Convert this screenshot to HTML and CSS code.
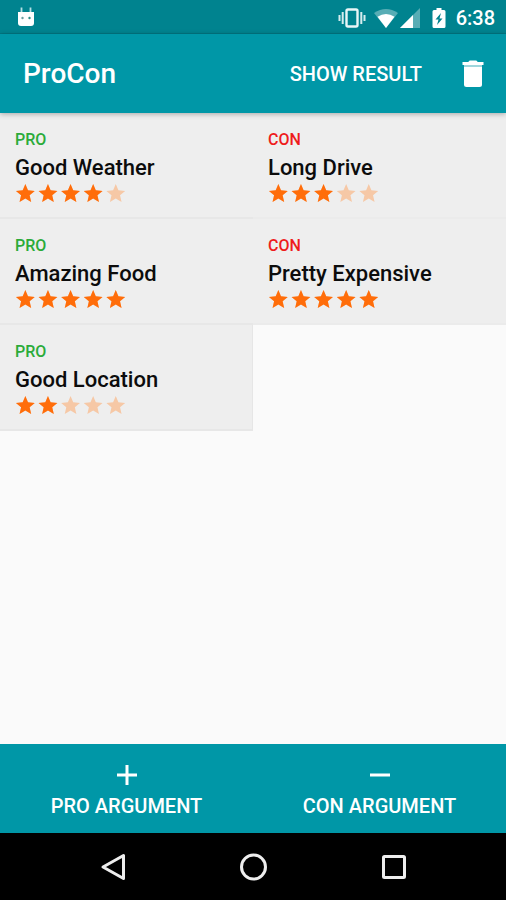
FILE: index.html
```html
<!DOCTYPE html>
<html lang="en">
<head>
<meta charset="utf-8">
<meta name="viewport" content="width=device-width, initial-scale=1">
<title>ProCon</title>
<link rel="stylesheet" href="styles.css">
</head>
<body>
<svg class="defs" aria-hidden="true">
  <symbol id="star" viewBox="0 0 24 24"><path d="M12 17.27 18.18 21l-1.64-7.03L22 9.24l-7.19-.61L12 2 9.19 8.63 2 9.24l5.46 4.73L5.82 21z"/></symbol>
  <symbol id="rating" viewBox="1 0 120 24">
    <use href="#star" width="24" height="24"/>
    <use href="#star" x="24" width="24" height="24"/>
    <use href="#star" x="48" width="24" height="24"/>
    <use href="#star" x="72" width="24" height="24"/>
    <use href="#star" x="96" width="24" height="24"/>
  </symbol>
</svg>
<div class="screen">
  <div class="status">
    <svg class="bot" width="18" height="22" viewBox="0 0 18 22" aria-hidden="true">
      <path d="M4.500 .5v5M13.500 .5v5" stroke="#b5dfe3" stroke-width="1.800"/>
      <path d="M1 5h16V16a3 3 0 0 1-3 3H4a3 3 0 0 1-3-3z" fill="#fff"/>
      <circle cx="5.500" cy="11" r="1.200" fill="#6d9ea0"/><circle cx="12.500" cy="11" r="1.200" fill="#2f8d84"/>
    </svg>
    <div class="indicators">
      <svg width="28" height="22" viewBox="0 0 28 22" aria-hidden="true">
        <rect x="8.500" y="2.500" width="11" height="17" rx="1.500" fill="none" stroke="#e9f6f7" stroke-width="2.400"/>
        <path d="M4.700 5v12M23.300 5v12M1.500 8v6M26.500 8v6" stroke="#d5edef" stroke-width="2"/>
      </svg>
      <svg class="wifi" width="26" height="22" viewBox="0 0 26 22" aria-hidden="true">
        <path d="M13 21 1 6Q13-2 25 6z" fill="#58adb5"/>
        <path d="M13 21 4.500 9.700Q13 4.500 21.500 9.700z" fill="#fff"/>
      </svg>
      <svg width="22" height="22" viewBox="0 0 22 22" aria-hidden="true">
        <path d="M1 21 21 1v20z" fill="#58adb5"/><path d="M1 21 14 8v13z" fill="#fff"/>
      </svg>
      <svg class="battery" width="14" height="22" viewBox="0 0 14 22" aria-hidden="true">
        <path d="M4.500 1h5v2H12q1.500 0 1.500 1.500v15q0 1.500-1.500 1.500H2Q.5 21 .5 19.500v-15Q.5 3 2 3h2.500z" fill="#fff"/>
        <path d="M9 6 3.500 12.500h3L5 18l5.500-6.500h-3z" fill="#00838f"/>
      </svg>
      <span class="clock">6:38</span>
    </div>
  </div>

  <header class="appbar">
    <h1>ProCon</h1>
    <button type="button" class="result">SHOW RESULT</button>
    <button type="button" class="trash" aria-label="Delete all">
      <svg width="22" height="28" viewBox="0 0 22 28" aria-hidden="true" fill="#fff">
        <path d="M2 7h18v17.500q0 2.500-2.500 2.500h-13Q2 27 2 24.500z"/>
        <path d="M.5 2h5.700L7.700.5h6.600L15.800 2h5.700v3H.5z"/>
        <path d="M2 5h18V7H2z" fill="#9fd6dc"/>
      </svg>
    </button>
  </header>

  <main class="board">
    <ul class="column">
      <li class="card pro">
        <span class="kind">PRO</span><h2>Good Weather</h2>
        <svg class="rating r4" role="img" aria-label="4 of 5"><use class="off" href="#rating"/><use class="on" href="#rating"/></svg>
      </li>
      <li class="card pro">
        <span class="kind">PRO</span><h2>Amazing Food</h2>
        <svg class="rating r5" role="img" aria-label="5 of 5"><use class="off" href="#rating"/><use class="on" href="#rating"/></svg>
      </li>
      <li class="card pro">
        <span class="kind">PRO</span><h2>Good Location</h2>
        <svg class="rating r2" role="img" aria-label="2 of 5"><use class="off" href="#rating"/><use class="on" href="#rating"/></svg>
      </li>
    </ul>
    <ul class="column">
      <li class="card con">
        <span class="kind">CON</span><h2>Long Drive</h2>
        <svg class="rating r3" role="img" aria-label="3 of 5"><use class="off" href="#rating"/><use class="on" href="#rating"/></svg>
      </li>
      <li class="card con">
        <span class="kind">CON</span><h2>Pretty Expensive</h2>
        <svg class="rating r5" role="img" aria-label="5 of 5"><use class="off" href="#rating"/><use class="on" href="#rating"/></svg>
      </li>
    </ul>
  </main>

  <footer class="actions">
    <button type="button">
      <svg width="22" height="22" viewBox="0 0 22 22" aria-hidden="true"><path d="M11 1v20M1 11h20" stroke="#fff" stroke-width="3"/></svg>
      <span>PRO ARGUMENT</span>
    </button>
    <button type="button">
      <svg width="22" height="22" viewBox="0 0 22 22" aria-hidden="true"><path d="M1 11h20" stroke="#fff" stroke-width="3"/></svg>
      <span>CON ARGUMENT</span>
    </button>
  </footer>

  <nav class="softkeys" aria-label="System">
    <button type="button" aria-label="Back">
      <svg width="28" height="28" viewBox="0 0 28 28" aria-hidden="true"><path d="M24.500 2.500v23L4 14z"/></svg>
    </button>
    <button type="button" aria-label="Home">
      <svg width="28" height="28" viewBox="0 0 28 28" aria-hidden="true"><circle cx="14.500" cy="14" r="12"/></svg>
    </button>
    <button type="button" aria-label="Overview">
      <svg width="28" height="28" viewBox="0 0 28 28" aria-hidden="true"><rect x="4.500" y="3.500" width="21" height="21" rx="1"/></svg>
    </button>
  </nav>
</div>
</body>
</html>
```
FILE: styles.css
```css
* { box-sizing: border-box; }

body {
  margin: 0;
  background: #fafafa;
  color: #111;
  font-family: Roboto, "Liberation Sans", sans-serif;
}

button {
  border: 0;
  padding: 0;
  background: none;
  color: inherit;
  font: inherit;
  cursor: pointer;
}

h1, h2, ul { margin: 0; padding: 0; }
svg { display: block; }

.defs { position: absolute; width: 0; height: 0; }

.screen {
  display: flex;
  flex-direction: column;
  min-height: 100vh;
}

.status {
  display: flex;
  align-items: center;
  justify-content: space-between;
  height: 34px;
  padding: 2px 11px 0 17px;
  border-bottom: 1px solid #007783;
  background: #00838f;
  color: #fff;
}

.indicators { display: flex; align-items: center; }
.wifi { margin-left: 7px; }
.battery { margin: 0 10px 0 11px; }
.clock { font-size: 20px; font-weight: 500; line-height: 24px; }

.appbar {
  display: flex;
  align-items: center;
  height: 79px;
  padding: 1px 22px 0 23px;
  background: #0097a7;
  color: #fff;
  box-shadow: 0 1px 5px rgba(0, 0, 0, 0.3);
  z-index: 1;
}

.appbar h1 {
  flex: 1;
  font-size: 28px;
  font-weight: 500;
  line-height: 32px;
}

.result { font-size: 20px; font-weight: 500; line-height: 24px; }
.trash { margin-left: 40px; }

.board {
  flex: 1;
  display: grid;
  grid-template-columns: 1fr 1fr;
  align-items: start;
}

.column { list-style: none; }

.card {
  padding: 17px 15px 12px;
  border-bottom: 2px solid #e7e7e7;
  background: #eee;
}

.con { border-bottom-color: #ebebeb; }
.pro:last-child { border-right: 1px solid #e6e6e6; }

.kind {
  display: block;
  font-size: 16px;
  font-weight: 500;
  line-height: 20px;
}

.pro .kind { color: #2bab3a; }
.con .kind { color: #ee1c1c; }

.card h2 {
  padding-top: 4px;
  font-size: 22px;
  font-weight: 500;
  line-height: 28px;
  color: #0c0c0c;
}

.rating { width: 113px; height: 23px; }
.off { fill: #f6c8a6; }
.on { fill: #ff6d0a; }
.r4 .on { clip-path: inset(0 20% 0 0); }
.r3 .on { clip-path: inset(0 40% 0 0); }
.r2 .on { clip-path: inset(0 60% 0 0); }

.actions {
  display: grid;
  grid-template-columns: 1fr 1fr;
  background: #0097a7;
  color: #fff;
}

.actions button {
  display: flex;
  flex-direction: column;
  align-items: center;
  gap: 8px;
  padding: 20px 0 15px;
  font-size: 20px;
  font-weight: 500;
  line-height: 24px;
}

.softkeys {
  display: flex;
  align-items: center;
  justify-content: center;
  gap: 112px;
  height: 67px;
  background: #000;
}

.softkeys svg {
  fill: none;
  stroke: #eee;
  stroke-width: 3;
  stroke-linejoin: round;
}
```
